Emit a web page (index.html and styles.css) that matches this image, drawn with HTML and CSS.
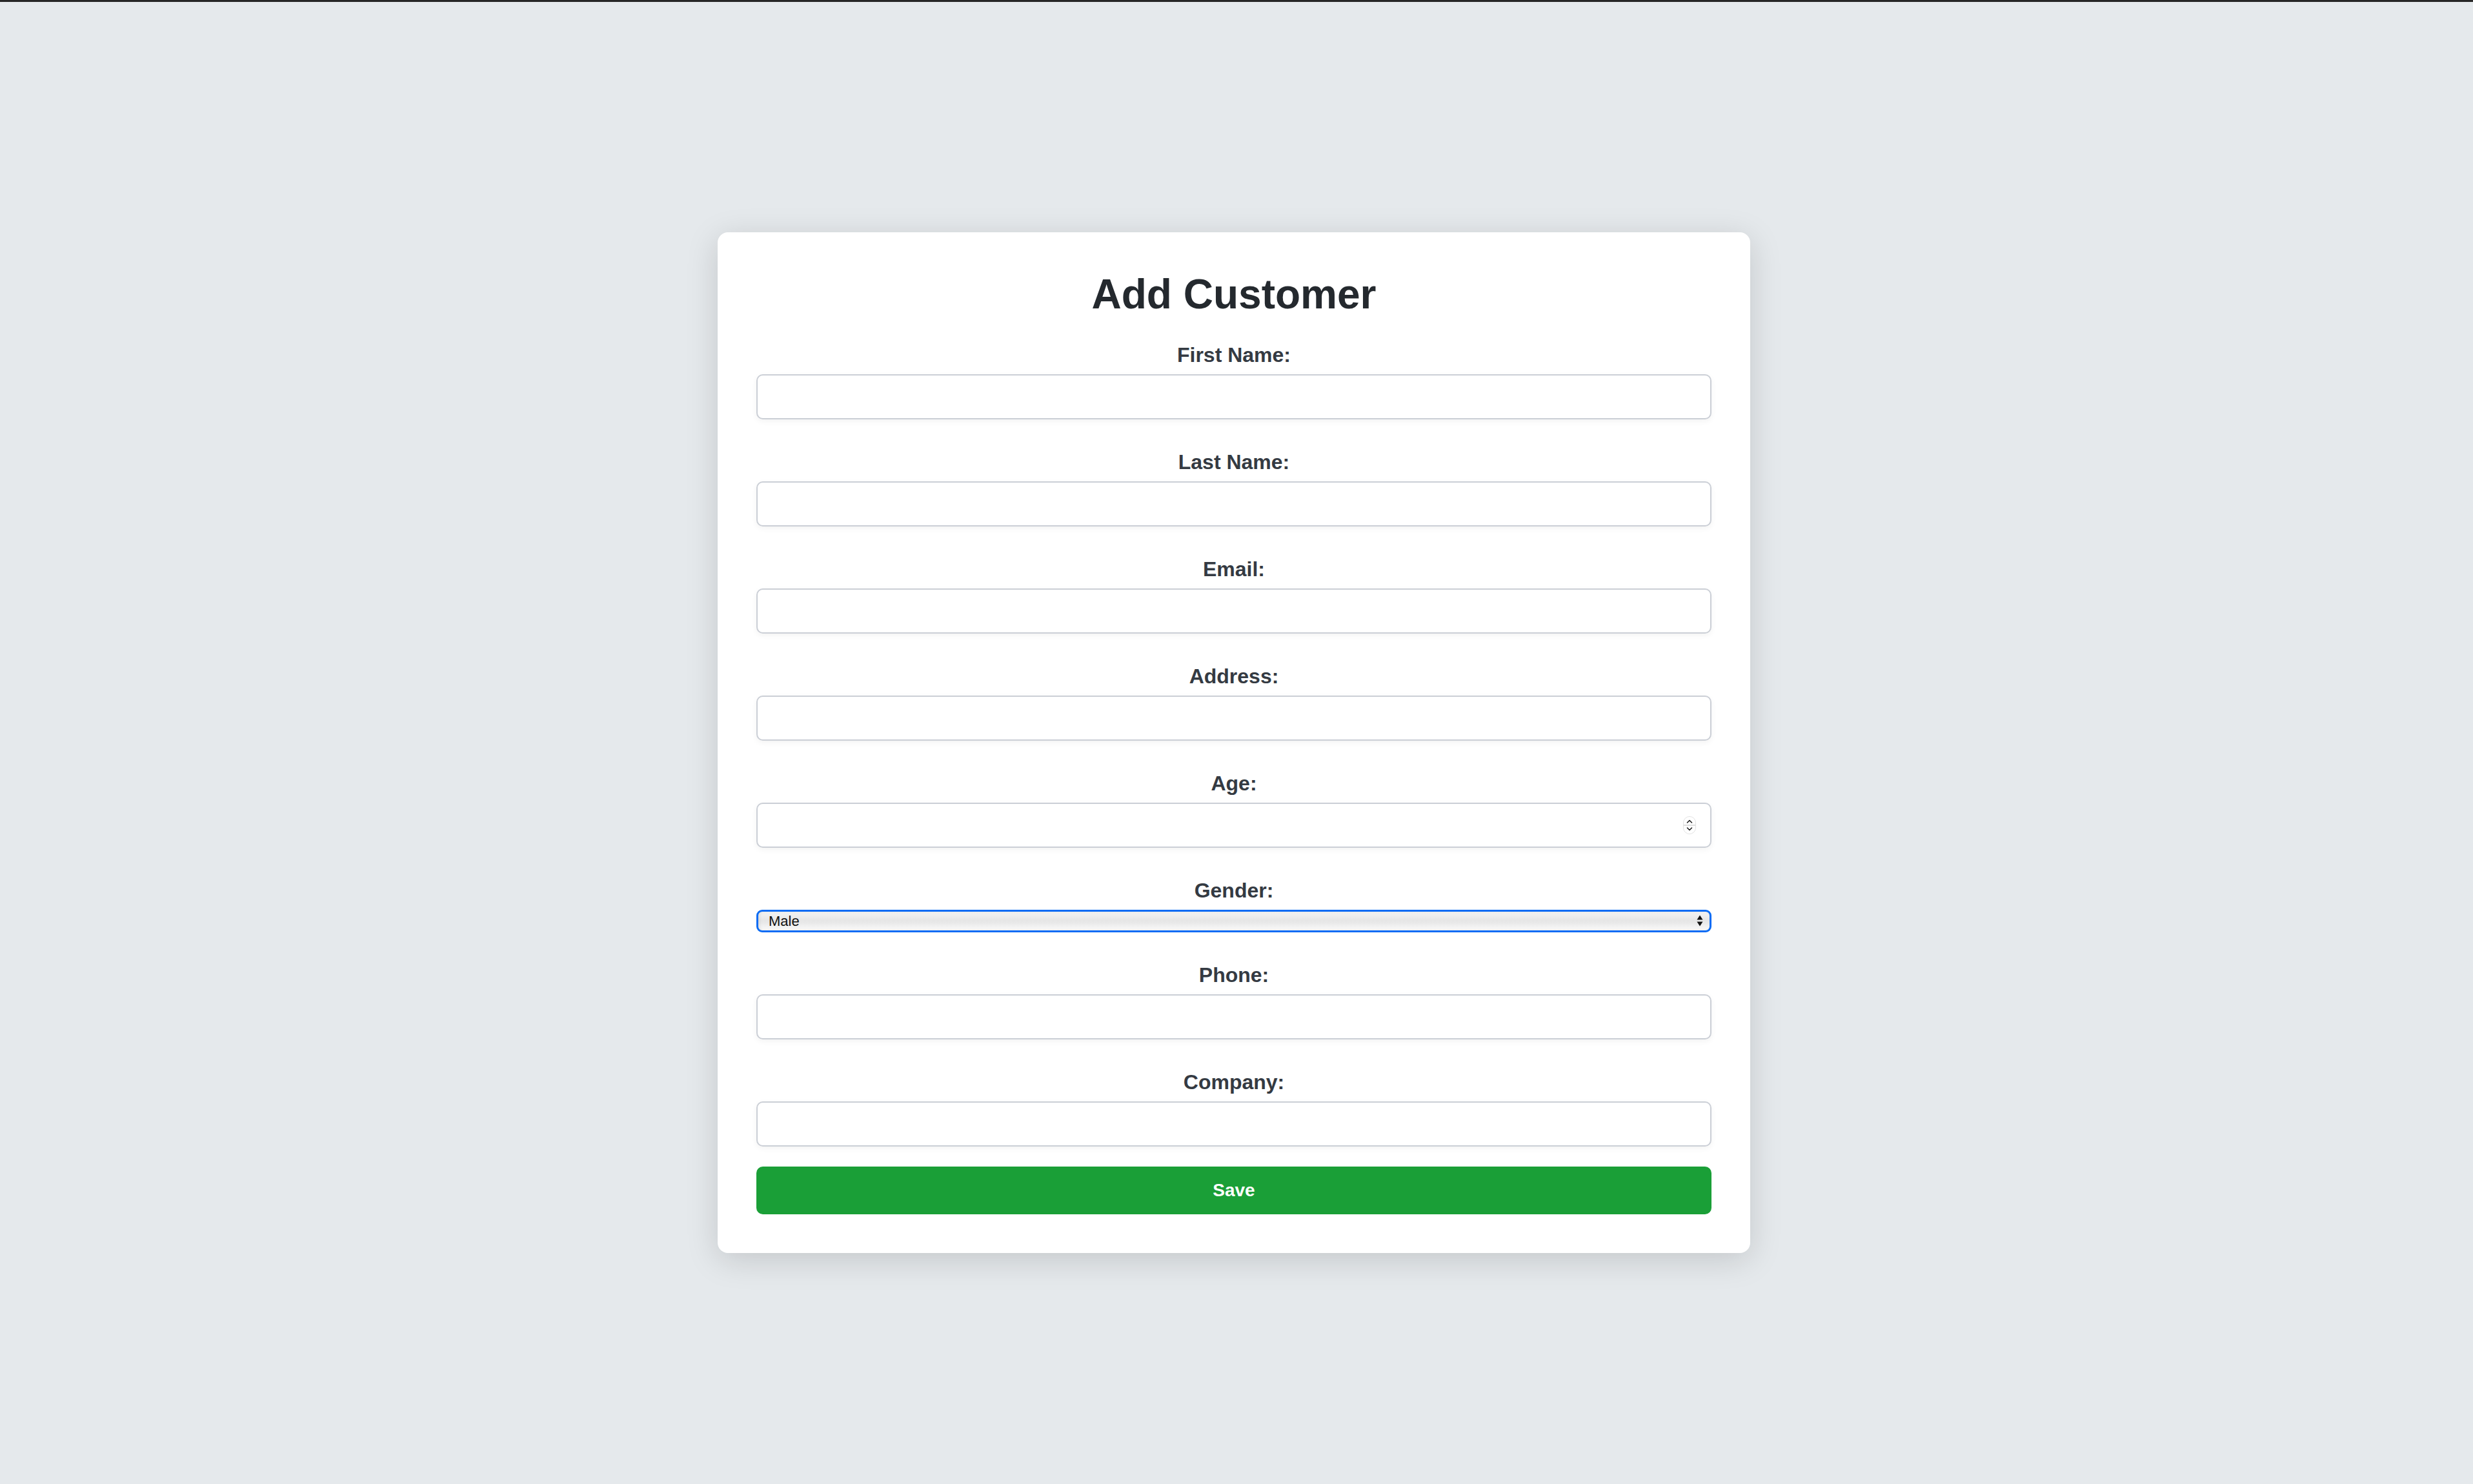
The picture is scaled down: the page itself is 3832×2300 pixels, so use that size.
FILE: index.html
```html
<!DOCTYPE html>
<html lang="en">
<head>
<meta charset="utf-8">
<title>Add Customer</title>
<link rel="stylesheet" href="styles.css">
</head>
<body>
<main class="page">
  <section class="card">
    <h1 class="title">Add Customer</h1>
    <form class="form">
      <div class="field">
        <label class="label" for="first">First Name:</label>
        <input class="input" id="first" type="text">
      </div>
      <div class="field">
        <label class="label" for="last">Last Name:</label>
        <input class="input" id="last" type="text">
      </div>
      <div class="field">
        <label class="label" for="email">Email:</label>
        <input class="input" id="email" type="email">
      </div>
      <div class="field">
        <label class="label" for="address">Address:</label>
        <input class="input" id="address" type="text">
      </div>
      <div class="field">
        <label class="label" for="age">Age:</label>
        <div class="control">
          <input class="input input-number" id="age" type="number">
          <span class="spinner">
            <svg width="20" height="28" viewBox="0 0 20 28">
              <rect x="0.5" y="0.5" width="19" height="27" rx="9.5" fill="#fff" stroke="#e2e2e2"/>
              <line x1="1" y1="14" x2="19" y2="14" stroke="#d4d4d4" stroke-width="1.5"/>
              <path d="M6.5 10 L10 6.5 L13.5 10" fill="none" stroke="#222" stroke-width="1.6" stroke-linecap="round" stroke-linejoin="round"/>
              <path d="M6.5 18 L10 21.5 L13.5 18" fill="none" stroke="#222" stroke-width="1.6" stroke-linecap="round" stroke-linejoin="round"/>
            </svg>
          </span>
        </div>
      </div>
      <div class="field">
        <label class="label" for="gender">Gender:</label>
        <div class="control">
          <select class="select" id="gender">
            <option>Male</option>
            <option>Female</option>
          </select>
          <span class="select-arrows">
            <svg width="10" height="18" viewBox="0 0 10 18">
              <path d="M5 0.5 L9.5 7.5 L0.5 7.5 Z" fill="#111"/>
              <path d="M5 17.5 L9.5 10.5 L0.5 10.5 Z" fill="#111"/>
            </svg>
          </span>
        </div>
      </div>
      <div class="field">
        <label class="label" for="phone">Phone:</label>
        <input class="input" id="phone" type="text">
      </div>
      <div class="field field-last">
        <label class="label" for="company">Company:</label>
        <input class="input" id="company" type="text">
      </div>
      <button class="save" type="button">Save</button>
    </form>
  </section>
</main>
</body>
</html>
```
FILE: styles.css
```css
* {
  box-sizing: border-box;
}

html, body {
  margin: 0;
  padding: 0;
}

body {
  background: #e5e9ec;
  font-family: "Liberation Sans", Arial, sans-serif;
  border-top: 3px solid #262626;
}

.page {
  min-height: 2295px;
  display: flex;
  align-items: center;
  justify-content: center;
  padding-right: 8px;
}

.card {
  width: 1600px;
  background: #ffffff;
  border-radius: 16px;
  padding: 60px 60px 60px 60px;
  box-shadow: 0 10px 50px rgba(0, 0, 0, 0.15);
}

.title {
  margin: 0 0 39px 0;
  font-size: 64px;
  line-height: 72px;
  font-weight: 700;
  text-align: center;
  color: #24292e;
}

.form {
  display: flex;
  flex-direction: column;
}

.field {
  display: flex;
  flex-direction: column;
  margin-bottom: 47px;
}

.field-last {
  margin-bottom: 31px;
}

.label {
  display: block;
  text-align: center;
  font-size: 32px;
  line-height: 38px;
  font-weight: 700;
  color: #343a42;
  margin-bottom: 11px;
}

.control {
  position: relative;
}

.input {
  display: block;
  width: 100%;
  height: 70px;
  border: 2px solid #cbcfd6;
  border-radius: 10px;
  background: #ffffff;
  padding: 0 18px;
  font-family: "Liberation Sans", Arial, sans-serif;
  font-size: 28px;
  box-shadow: 0 3px 10px rgba(0, 0, 0, 0.05);
  outline: none;
}

.input-number {
  -moz-appearance: textfield;
}

.input-number::-webkit-inner-spin-button,
.input-number::-webkit-outer-spin-button {
  -webkit-appearance: none;
  margin: 0;
}

.spinner {
  position: absolute;
  right: 24px;
  top: 21px;
  width: 20px;
  height: 28px;
  display: block;
}

.spinner svg {
  display: block;
}

.select {
  display: block;
  width: 100%;
  height: 35px;
  -webkit-appearance: none;
  appearance: none;
  border: 3px solid #0b6cf4;
  border-radius: 9px;
  padding: 0 40px 0 16px;
  font-family: "Liberation Sans", Arial, sans-serif;
  font-size: 22px;
  color: #111;
  background: linear-gradient(to bottom, #f4f4f4 0%, #e6e6e6 45%, #e9e9e9 60%, #fbfbfb 100%);
  box-shadow: inset 2px 0 4px rgba(0, 0, 0, 0.08);
  outline: none;
}

.select-arrows {
  position: absolute;
  right: 13px;
  top: 8px;
  width: 10px;
  height: 18px;
  display: block;
  pointer-events: none;
}

.select-arrows svg {
  display: block;
}

.save {
  display: block;
  width: 100%;
  height: 74px;
  border: none;
  border-radius: 10px;
  background: #1a9f37;
  color: #ffffff;
  font-family: "Liberation Sans", Arial, sans-serif;
  font-size: 28px;
  font-weight: 700;
  cursor: pointer;
}
```
